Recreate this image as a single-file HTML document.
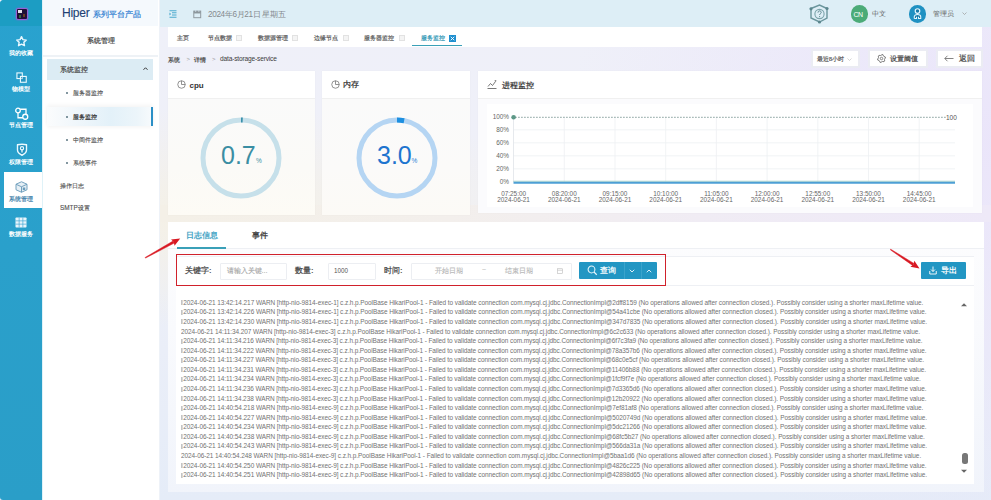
<!DOCTYPE html>
<html><head><meta charset="utf-8">
<style>
*{margin:0;padding:0;box-sizing:border-box}
html,body{width:991px;height:500px;overflow:hidden;font-family:"Liberation Sans",sans-serif;color:#333}
body{background:radial-gradient(ellipse 420px 110px at 200px 218px,rgba(245,241,230,1),rgba(245,241,230,0)),radial-gradient(ellipse 420px 420px at 991px 140px,rgba(234,228,250,.9),rgba(234,228,250,.5) 50%,rgba(234,228,250,0) 100%),linear-gradient(180deg,#eff0f9 0%,#eff0f8 40%,#e5ecf8 100%);position:relative}
.a{position:absolute;white-space:nowrap}
.t{position:absolute;white-space:nowrap;line-height:1}
/* icon bar */
#ib{left:0;top:0;width:42px;height:500px;background:linear-gradient(180deg,#29a2cf 0%,#2aa0cb 50%,#2a9ec8 100%);border-top-left-radius:4px;border-bottom-left-radius:3px;overflow:hidden}
#ib .top{left:0;top:0;width:42px;height:26px;background:#1c9dc3}
.nl{left:0;width:42px;text-align:center;color:#fff;font-size:6.3px;line-height:8px;font-weight:600}
/* sidebar */
#sb{left:42px;top:0;width:118px;height:500px;background:#fff;border-right:1px solid #eef2f8;border-left:1px solid #dff2f8}
.sl{font-size:6.4px;color:#505050;line-height:8px;-webkit-text-stroke:0.12px #505050}
.dot{position:absolute;width:2px;height:2px;border-radius:1px;background:#5a7480}
/* header */
#hd{left:160px;top:0;width:831px;height:27px;background:#ddeef6}
#tabs{left:168px;top:27px;width:814px;height:20px;background:#fff}
.tb{font-size:6.3px;color:#666;line-height:8px;font-weight:600}
.cx{position:absolute;width:6px;height:6px;border:1px solid #e2e2e2;background:#f4f4f4}
.card{position:absolute;background:#fff;box-shadow:0 0 1px rgba(0,0,0,.06)}
.card .bd{position:absolute;left:0;top:27px;right:0;bottom:0;background:#fbfbfb;border-top:1px solid #f0f0f0}
.ll{height:9.58px;line-height:9.58px;font-size:6.45px;color:#727272;letter-spacing:-0.063px;white-space:nowrap}
.pm{display:inline-block;width:2px;height:5px;border-left:0.8px solid #c4c4c4;border-right:0.8px solid #d8d8d8;vertical-align:-0.5px;margin-right:0.3px}
.btn{position:absolute;background:#fff;border:2px solid #ebecf3;border-radius:1px}
.lbl{font-size:7.6px;color:#555;line-height:10px;font-weight:600}
.inp{position:absolute;background:#fff;border:1px solid #eceef2;border-radius:1px}
.ph{font-size:7.3px;color:#a4a4a4;line-height:8px;-webkit-text-stroke:0.1px #a4a4a4}
.ax{font-size:6.4px;color:#666;line-height:7px;text-align:center}
</style></head><body>

<!-- ICON BAR -->
<div id="ib" class="a">
  <div class="a top"></div>
  <div class="a" style="left:16.5px;top:8.5px;width:10px;height:10px;background:#1f1036;box-shadow:0 0 1.5px 0.8px #b452d8;border-radius:1px"></div>
  <div class="a" style="left:18px;top:10px;width:3.5px;height:3px;background:#e4e0ea"></div>
  <div class="a" style="left:18.5px;top:14.5px;width:2px;height:3px;background:#2e6a3a"></div>
  <div class="a" style="left:22.5px;top:14px;width:2.5px;height:3px;background:#6a3a22"></div>
  <!-- star -->
  <svg class="a" style="left:15px;top:34.5px" width="13" height="13" viewBox="0 0 24 24"><path d="M12 3l2.7 5.6 6.1.8-4.5 4.2 1.2 6.1L12 16.8l-5.5 2.9 1.2-6.1-4.5-4.2 6.1-.8z" fill="rgba(20,120,170,.25)" stroke="#e8f8ff" stroke-width="2.6" stroke-linejoin="round"/></svg>
  <div class="a nl" style="top:48.5px">我的收藏</div>
  <!-- model -->
  <svg class="a" style="left:15.8px;top:71.6px" width="11.2" height="11.2" viewBox="0 0 24 24"><rect x="2" y="2" width="11.5" height="12" fill="rgba(20,110,160,.25)" stroke="#eafaff" stroke-width="2.4"/><rect x="9.5" y="9.5" width="12.5" height="12.5" fill="rgba(20,110,160,.25)" stroke="#eafaff" stroke-width="2.4"/></svg>
  <div class="a nl" style="top:85px">物模型</div>
  <!-- node -->
  <svg class="a" style="left:12px;top:105px" width="20" height="17" viewBox="0 0 40 34"><circle cx="12" cy="11" r="4.6" fill="none" stroke="#fff" stroke-width="2.6"/><circle cx="26.5" cy="23.5" r="5" fill="none" stroke="#fff" stroke-width="2.6"/><path d="M16.5 8.5H28V18M12 15.6V25.5H21.5" fill="none" stroke="#fff" stroke-width="2.6"/></svg>
  <div class="a nl" style="top:120.7px">节点管理</div>
  <!-- shield -->
  <svg class="a" style="left:15.5px;top:143px" width="12" height="13" viewBox="0 0 24 26"><path d="M3 3.5Q12 1.5 21 3.5V14c0 4.5-4 8-9 10.5C7 22 3 18.5 3 14z" fill="rgba(20,110,160,.3)" stroke="#eafaff" stroke-width="2.8" stroke-linejoin="round"/><circle cx="12" cy="10.5" r="3.2" fill="none" stroke="#eafaff" stroke-width="2.4"/><path d="M12 13.5v5.5" stroke="#eafaff" stroke-width="2.6"/></svg>
  <div class="a nl" style="top:158px">权限管理</div>
  <!-- active -->
  <div class="a" style="left:4px;top:171.5px;width:38px;height:36.5px;background:#fff"></div>
  <svg class="a" style="left:15px;top:180.5px" width="13" height="12" viewBox="0 0 26 24"><path d="M13 1.5L24 6.5v11L13 22.5 2 17.5v-11z" fill="#e6eff5" stroke="#6b9cbb" stroke-width="1.9"/><path d="M2 6.5l11 5 11-5M13 11.5v11" fill="none" stroke="#6b9cbb" stroke-width="1.9"/><rect x="15.5" y="13" width="5" height="5" fill="#6b9cbb"/></svg>
  <div class="a nl" style="top:194.5px;color:#4a86ad">系统管理</div>
  <!-- grid -->
  <svg class="a" style="left:15px;top:217px" width="12" height="11" viewBox="0 0 24 22"><rect x="1" y="1" width="22" height="20" rx="1.5" fill="#eaf5fb"/><path d="M1 7.7h22M1 14.3h22M8.3 1v20M15.7 1v20" stroke="#3aa6d4" stroke-width="1.3"/></svg>
  <div class="a nl" style="top:230px">数据服务</div>
</div>

<!-- SIDEBAR -->
<div id="sb" class="a">
  <div class="a" style="left:0;top:0;width:115px;height:26px;background:#f5f9fd"></div>
  <div class="t" style="left:18.5px;top:6px;font-size:13px;color:#203f73;letter-spacing:-0.3px;-webkit-text-stroke:0.1px #203f73;transform:scaleX(0.93);transform-origin:0 0">Hiper</div>
  <div class="t" style="left:49.5px;top:10.5px;font-size:8px;color:#4a8ed6;font-weight:600">系列平台产品</div>
  <div class="t" style="left:44px;top:36.5px;font-size:7.3px;color:#555;font-weight:600">系统管理</div>
  <div class="a" style="left:0;top:55px;width:115px;height:1.5px;background:#eef2f6"></div>
  <div class="a" style="left:4px;top:59px;width:106px;height:21px;background:#dcecf4"></div>
  <div class="t sl" style="left:17px;top:65.5px;color:#444;font-size:6.8px;-webkit-text-stroke:0.2px #444">系统监控</div>
  <svg class="a" style="left:100px;top:67px" width="5" height="3" viewBox="0 0 10 6"><path d="M1 5.5L5 1.5l4 4" fill="none" stroke="#333" stroke-width="2"/></svg>
  <div class="dot" style="left:23px;top:92px"></div>
  <div class="t sl" style="left:29.5px;top:89px">服务器监控</div>
  <div class="a" style="left:4px;top:106.5px;width:106px;height:19.5px;background:linear-gradient(90deg,#fbfcfd 0%,#f1f7fb 25%,#e3f1f9 60%,#ecf5fa 85%,#f8fbfd 100%);box-shadow:0 -2px 4px rgba(0,0,0,.045),0 2px 3px rgba(0,0,0,.03)"></div>
  <div class="a" style="left:107.5px;top:106.5px;width:2px;height:19px;background:#2b8fc6"></div>
  <div class="dot" style="left:23px;top:115.5px"></div>
  <div class="t sl" style="left:29.5px;top:112.5px;color:#333;-webkit-text-stroke:0.2px #333">服务监控</div>
  <div class="dot" style="left:23px;top:139px"></div>
  <div class="t sl" style="left:30px;top:136px">中间件监控</div>
  <div class="dot" style="left:23px;top:161.5px"></div>
  <div class="t sl" style="left:30px;top:158.5px">系统事件</div>
  <div class="t sl" style="left:17px;top:181.5px">操作日志</div>
  <div class="t sl" style="left:17px;top:204px">SMTP设置</div>
</div>

<!-- HEADER -->
<div id="hd" class="a">
  <svg class="a" style="left:9px;top:10px" width="8" height="8" viewBox="0 0 16 16"><path d="M1 1.5h14M6 5.5h9M6 10h9M1 14.5h14" stroke="#3aa0c8" stroke-width="1.8"/><path d="M1 5l3 3-3 3z" fill="#3aa0c8"/></svg>
  <svg class="a" style="left:33px;top:10px" width="8.5" height="8.5" viewBox="0 0 16 16"><rect x="1.5" y="2" width="13" height="12.5" fill="none" stroke="#8d979d" stroke-width="1.8"/><rect x="1.5" y="2" width="13" height="4.5" fill="#8d979d"/><path d="M5 0.5v3M11 0.5v3" stroke="#ddeef6" stroke-width="1.4"/></svg>
  <div class="t" style="left:48px;top:10.5px;font-size:8.2px;color:#858a8e;letter-spacing:-0.35px">2024年6月21日 星期五</div>
  <!-- help hex -->
  <svg class="a" style="left:645px;top:2px" width="30" height="25" viewBox="0 0 30 25"><path d="M6 6.5L14.5 3 22 6.5V16L14.5 20 6 16Z" fill="none" stroke="#6a959c" stroke-width="1.4"/><circle cx="6" cy="6.8" r="1.6" fill="#5b868e"/><circle cx="22" cy="6.5" r="1.6" fill="#5b868e"/><circle cx="14.5" cy="20" r="1.6" fill="#5b868e"/><circle cx="14.5" cy="12" r="4.6" fill="none" stroke="#7aa3aa" stroke-width="1.1"/><path d="M13 10.6c0-1 .7-1.7 1.6-1.7s1.6.7 1.6 1.6c0 1.2-1.6 1.2-1.6 2.5" fill="none" stroke="#5b868e" stroke-width="1"/><circle cx="14.6" cy="14.6" r=".6" fill="#5b868e"/></svg>
  <div class="a" style="left:690.5px;top:5px;width:17.5px;height:17.5px;border-radius:50%;background:#4bab78"></div>
  <div class="t" style="left:693.5px;top:10.5px;font-size:7px;color:#fff;letter-spacing:-0.6px">CN</div>
  <div class="t" style="left:712px;top:10px;font-size:7.2px;color:#666">中文</div>
  <div class="a" style="left:748.5px;top:5px;width:17.5px;height:17.5px;border-radius:50%;background:#1f91c2"></div>
  <svg class="a" style="left:752px;top:6.5px" width="11" height="13" viewBox="0 0 22 26"><circle cx="11" cy="8" r="4.6" fill="rgba(10,80,120,.35)" stroke="#e6f7fd" stroke-width="2.3"/><path d="M4.5 23V19.5Q4.5 15 11 15Q17.5 15 17.5 19.5V23H13V19.5M9 19.5V23H4.5" fill="rgba(10,80,120,.35)" stroke="#e6f7fd" stroke-width="2.1" stroke-linejoin="round"/></svg>
  <div class="t" style="left:773px;top:10px;font-size:7.2px;color:#666">管理员</div>
  <svg class="a" style="left:802px;top:12px" width="5" height="3" viewBox="0 0 10 6"><path d="M1 1l4 4 4-4" fill="none" stroke="#999" stroke-width="1.4"/></svg>
</div>

<!-- TABS -->
<div class="a" style="left:160px;top:205px;width:831px;height:17px;background:linear-gradient(90deg,rgba(244,240,231,1) 0%,rgba(243,239,236,1) 35%,rgba(240,236,244,1) 65%,rgba(238,233,248,1) 100%)"></div>
<div id="tabs" class="a">
  <div class="t tb" style="left:9px;top:6.5px">主页</div>
  <div class="t tb" style="left:40px;top:6.5px">节点数据</div><div class="cx" style="left:68px;top:8px"></div>
  <div class="t tb" style="left:89.5px;top:6.5px">数据源管理</div><div class="cx" style="left:124px;top:8px"></div>
  <div class="t tb" style="left:145.5px;top:6.5px">边缘节点</div><div class="cx" style="left:174.5px;top:8px"></div>
  <div class="t tb" style="left:196px;top:6.5px">服务器监控</div><div class="cx" style="left:231px;top:8px"></div>
  <div class="t tb" style="left:252.5px;top:6.5px;color:#3a9bb8">服务监控</div>
  <svg class="a" style="left:281px;top:7.5px" width="7" height="7" viewBox="0 0 14 14"><rect x="0" y="0" width="14" height="14" fill="#1f8fd0"/><path d="M3.5 3.5l7 7M10.5 3.5l-7 7" stroke="#fff" stroke-width="1.8"/></svg>
  <div class="a" style="left:244px;top:17.5px;width:50px;height:1.6px;background:#3aa0b8"></div>
</div>

<!-- BREADCRUMB -->
<div class="t" style="left:168px;top:55.5px;font-size:6.4px;color:#555;line-height:8px;font-weight:600">系统</div>
<div class="t" style="left:186.5px;top:55px;font-size:6px;color:#999;line-height:8px">&gt;</div>
<div class="t" style="left:194px;top:55.5px;font-size:6.4px;color:#555;line-height:8px;font-weight:600">详情</div>
<div class="t" style="left:212px;top:55px;font-size:6px;color:#999;line-height:8px">&gt;</div>
<div class="t" style="left:220px;top:55px;font-size:6.6px;color:#3c3c3c;line-height:8px;letter-spacing:-0.17px">data-storage-service</div>

<div class="btn" style="left:811px;top:48.5px;width:49px;height:19px"></div>
<div class="t" style="left:817px;top:54.5px;font-size:6.2px;color:#666;line-height:8px;letter-spacing:-0.1px;font-weight:600">最近8小时</div>
<svg class="a" style="left:847px;top:57.5px" width="5" height="3" viewBox="0 0 10 6"><path d="M1 1l4 4 4-4" fill="none" stroke="#bbb" stroke-width="1.2"/></svg>
<div class="btn" style="left:868px;top:48.5px;width:60px;height:19px"></div>
<svg class="a" style="left:876.5px;top:54px" width="9" height="9" viewBox="0 0 16 16"><path d="M8.94 0.86 L10.76 1.35 L11.41 3.56 L12.44 4.59 L14.65 5.24 L15.14 7.06 L13.55 8.73 L13.17 10.14 L13.71 12.38 L12.38 13.71 L10.14 13.17 L8.73 13.55 L7.06 15.14 L5.24 14.65 L4.59 12.44 L3.56 11.41 L1.35 10.76 L0.86 8.94 L2.45 7.27 L2.83 5.86 L2.29 3.62 L3.62 2.29 L5.86 2.83 L7.27 2.45Z" fill="none" stroke="#666" stroke-width="1.5" stroke-linejoin="round"/><circle cx="8" cy="8" r="2.2" fill="none" stroke="#666" stroke-width="1.4"/></svg>
<div class="t" style="left:889.5px;top:54.5px;font-size:7.4px;color:#5a5a5a;line-height:8px;font-weight:600">设置阈值</div>
<div class="btn" style="left:936px;top:48.5px;width:47px;height:19px"></div>
<svg class="a" style="left:944px;top:55px" width="10" height="7" viewBox="0 0 20 14"><path d="M19 7H2M7 1.5L1.5 7 7 12.5" fill="none" stroke="#666" stroke-width="1.6"/></svg>
<div class="t" style="left:959px;top:54.5px;font-size:7.6px;color:#5a5a5a;line-height:8px;font-weight:600">返回</div>

<!-- CPU CARD -->
<div class="card" style="left:168px;top:71px;width:147px;height:143.5px">
  <div class="bd" style="background:linear-gradient(180deg,#fafafa 0%,#fbfaf7 60%,#fdfbf5 100%)"></div>
</div>
<svg class="a" style="left:176.5px;top:80px" width="9" height="9" viewBox="0 0 18 18"><circle cx="9" cy="9" r="7.5" fill="none" stroke="#777" stroke-width="1.6"/><path d="M9 1.5V9h7.5" fill="none" stroke="#777" stroke-width="1.6"/></svg>
<div class="t" style="left:189.5px;top:80.5px;font-size:8px;font-weight:bold;color:#333;line-height:9px">cpu</div>
<svg class="a" style="left:200px;top:116.5px" width="82" height="82" viewBox="0 0 82 82"><circle cx="41" cy="41" r="38" fill="none" stroke="#c6e0ea" stroke-width="5"/><path d="M41 3 A38 38 0 0 1 42.7 3.04" fill="none" stroke="#3a8fab" stroke-width="5"/></svg>
<div class="t" style="left:221px;top:143px;font-size:25px;color:#3a8ea3;line-height:25px">0.7</div>
<div class="t" style="left:256px;top:157px;font-size:6.5px;color:#3a8ea3;line-height:7px">%</div>

<!-- MEM CARD -->
<div class="card" style="left:322px;top:71px;width:148px;height:143.5px">
  <div class="bd" style="background:linear-gradient(180deg,#fafafa 0%,#fbfaf9 60%,#fcfaf6 100%)"></div>
</div>
<svg class="a" style="left:331px;top:80px" width="9" height="9" viewBox="0 0 18 18"><circle cx="9" cy="9" r="7.5" fill="none" stroke="#777" stroke-width="1.6"/><path d="M9 1.5V9h7.5" fill="none" stroke="#777" stroke-width="1.6"/></svg>
<div class="t" style="left:343px;top:80px;font-size:7.6px;color:#444;line-height:9px;font-weight:600">内存</div>
<svg class="a" style="left:355.5px;top:116.5px" width="82" height="82" viewBox="0 0 82 82"><circle cx="41" cy="41" r="38" fill="none" stroke="#b5d5f3" stroke-width="5"/><path d="M41 3 A38 38 0 0 1 48.1 3.67" fill="none" stroke="#1d8fe0" stroke-width="5"/></svg>
<div class="t" style="left:377px;top:143px;font-size:25px;color:#1d74cf;line-height:25px">3.0</div>
<div class="t" style="left:411.5px;top:157px;font-size:6.5px;color:#2a7fd6;line-height:7px">%</div>

<!-- PROCESS CARD -->
<div class="card" style="left:478px;top:71px;width:504px;height:141.5px">
  <div class="bd" style="background:#fbfbfd"></div>
  <div class="a" style="left:9px;top:33px;width:486px;height:103px;background:#fff"></div>
</div>
<svg class="a" style="left:487px;top:80px" width="10" height="9" viewBox="0 0 20 18"><path d="M1 17h18" stroke="#555" stroke-width="1.6"/><path d="M2 13l5-6 4 4 6-8" fill="none" stroke="#555" stroke-width="1.6"/><path d="M15 1.5l3-1-.8 3" fill="none" stroke="#555" stroke-width="1.2"/></svg>
<div class="t" style="left:501.5px;top:80.5px;font-size:7.6px;color:#444;line-height:9px;font-weight:600">进程监控</div>
<svg class="a" style="left:478px;top:100px" width="504" height="113" viewBox="0 0 504 113">
  <g stroke="#eef0f3" stroke-width="0.8">
    <path d="M35.5 29.8H477M35.5 42.8H477M35.5 55.8H477M35.5 68.8H477"/>
    <path d="M86.3 16.8V81.8M137.0 16.8V81.8M187.7 16.8V81.8M238.4 16.8V81.8M289.1 16.8V81.8M339.8 16.8V81.8M390.5 16.8V81.8M441.2 16.8V81.8"/>
  </g>
  <path d="M35.5 16.8V82" stroke="#e0e3e8" stroke-width="0.8"/>
  <path d="M37 17.3H468" stroke="#8aa39f" stroke-width="0.9" stroke-dasharray="1.8 1.2"/>
  <circle cx="35.6" cy="17.2" r="2.3" fill="#5d9887"/>
  <path d="M35.5 82.6H477" stroke="#4d9fd5" stroke-width="2.2"/>
  <path d="M35.5 81.2H477" stroke="#a8d2c8" stroke-width="0.8"/>
</svg>
<div class="t" style="left:946px;top:113.5px;font-size:6.5px;color:#555;line-height:7px">100</div>
<div class="t ax" style="left:486px;top:113.3px;width:23px;text-align:right">100%</div>
<div class="t ax" style="left:486px;top:126.3px;width:23px;text-align:right">80%</div>
<div class="t ax" style="left:486px;top:139.3px;width:23px;text-align:right">60%</div>
<div class="t ax" style="left:486px;top:152.3px;width:23px;text-align:right">40%</div>
<div class="t ax" style="left:486px;top:165.3px;width:23px;text-align:right">20%</div>
<div class="t ax" style="left:486px;top:178.3px;width:23px;text-align:right">0%</div>
<div class="t ax" style="left:493.6px;top:191.1px;width:40px;line-height:5.8px">07:25:00<br>2024-06-21</div>
<div class="t ax" style="left:544.3000000000001px;top:191.1px;width:40px;line-height:5.8px">08:20:00<br>2024-06-21</div>
<div class="t ax" style="left:595.0px;top:191.1px;width:40px;line-height:5.8px">09:15:00<br>2024-06-21</div>
<div class="t ax" style="left:645.7px;top:191.1px;width:40px;line-height:5.8px">10:10:00<br>2024-06-21</div>
<div class="t ax" style="left:696.4000000000001px;top:191.1px;width:40px;line-height:5.8px">11:05:00<br>2024-06-21</div>
<div class="t ax" style="left:747.1px;top:191.1px;width:40px;line-height:5.8px">12:00:00<br>2024-06-21</div>
<div class="t ax" style="left:797.8000000000001px;top:191.1px;width:40px;line-height:5.8px">12:55:00<br>2024-06-21</div>
<div class="t ax" style="left:848.5px;top:191.1px;width:40px;line-height:5.8px">13:50:00<br>2024-06-21</div>
<div class="t ax" style="left:899.2px;top:191.1px;width:40px;line-height:5.8px">14:45:00<br>2024-06-21</div>

<!-- LOG PANEL -->
<div class="a" style="left:168px;top:222px;width:816px;height:269.5px;background:linear-gradient(180deg,#fdfdfe 0%,#f9fafd 40%,#f1f4fb 100%)"></div>
<div class="a" style="left:168px;top:222px;width:816px;height:27px;background:#fff;border-bottom:1px solid #eef0f4"></div>
<div class="t" style="left:186px;top:231px;font-size:7.8px;color:#3fa3c4;line-height:9px;font-weight:600">日志信息</div>
<div class="t" style="left:251.5px;top:231px;font-size:8px;color:#3a3a3a;line-height:9px;-webkit-text-stroke:0.3px #3a3a3a">事件</div>
<div class="a" style="left:177px;top:247.2px;width:49px;height:1.6px;background:#3aa0b8"></div>
<div class="a" style="left:176px;top:256px;width:798px;height:28.5px;background:#fff;border-top:1px solid #eef0f4"></div>
<div class="t lbl" style="left:185px;top:265.5px">关键字:</div>
<div class="inp" style="left:220px;top:262.5px;width:67px;height:17px"></div>
<div class="t ph" style="left:226.5px;top:266.5px">请输入关键...</div>
<div class="t lbl" style="left:295px;top:265.5px">数量:</div>
<div class="inp" style="left:327.5px;top:262.5px;width:48px;height:17.5px"></div>
<div class="t" style="left:334px;top:267px;font-size:6.3px;color:#555;line-height:8px">1000</div>
<div class="t lbl" style="left:384px;top:265.5px">时间:</div>
<div class="inp" style="left:410.5px;top:262.5px;width:161px;height:17.5px"></div>
<div class="t ph" style="left:434.5px;top:266.5px;color:#bdbdbd">开始日期</div>
<div class="t ph" style="left:482px;top:266px;color:#bbb;font-weight:normal;font-size:7px">~</div>
<div class="t ph" style="left:504.5px;top:266.5px;color:#bdbdbd">结束日期</div>
<svg class="a" style="left:557px;top:267.5px" width="6" height="6" viewBox="0 0 12 12"><rect x="1" y="1.5" width="10" height="9.5" fill="none" stroke="#bbb" stroke-width="1.2"/><path d="M1 4.5h10" stroke="#bbb" stroke-width="1.2"/></svg>
<div class="a" style="left:579px;top:262.2px;width:78px;height:16.8px;background:#2296c3;border-radius:1px"></div>
<div class="a" style="left:623.5px;top:262.2px;width:0.6px;height:16.8px;background:#3aa3cc"></div>
<div class="a" style="left:640.5px;top:262.2px;width:0.6px;height:16.8px;background:#3aa3cc"></div>
<svg class="a" style="left:587px;top:265.3px" width="10.5" height="10.5" viewBox="0 0 21 21"><circle cx="9" cy="9" r="6.8" fill="none" stroke="#e8f6fc" stroke-width="2.1"/><path d="M14 14l5.5 5.5" stroke="#e8f6fc" stroke-width="2.3"/></svg>
<div class="t" style="left:600px;top:266.5px;font-size:8px;color:#f2fafd;line-height:8px;font-weight:600">查询</div>
<svg class="a" style="left:629px;top:268.5px" width="6" height="4" viewBox="0 0 12 8"><path d="M1.5 1.5l4.5 4.5 4.5-4.5" fill="none" stroke="#d8eef8" stroke-width="2"/></svg>
<svg class="a" style="left:646px;top:268.5px" width="6" height="4" viewBox="0 0 12 8"><path d="M1.5 6.5l4.5-4.5 4.5 4.5" fill="none" stroke="#d8eef8" stroke-width="2"/></svg>
<div class="a" style="left:921px;top:262px;width:45px;height:17px;background:#2296c3;border-radius:1px"></div>
<svg class="a" style="left:928.5px;top:265.5px" width="8" height="9" viewBox="0 0 16 18"><path d="M8 1v10M4 7l4 4 4-4" fill="none" stroke="#fff" stroke-width="1.8"/><path d="M1.5 10v6h13v-6" fill="none" stroke="#fff" stroke-width="1.8"/></svg>
<div class="t" style="left:940.5px;top:266.5px;font-size:8px;color:#fff;line-height:8px;font-weight:600">导出</div>

<!-- red arrows -->
<svg class="a" style="left:0;top:0" width="991" height="500" viewBox="0 0 991 500"><path d="M145.47 258.11 L174.23 243.09 L173.06 241.00 L145.13 257.49Z" fill="#d81822" stroke="#d81822" stroke-width="0.5" stroke-linejoin="round"/><path d="M174.52 245.68 L180.20 238.40 L171.02 239.38 L173.82 241.95Z" fill="#d81822"/></svg>
<svg class="a" style="left:0;top:0" width="991" height="500" viewBox="0 0 991 500"><path d="M890.31 249.79 L912.57 265.39 L913.88 263.39 L890.69 249.21Z" fill="#d81822" stroke="#d81822" stroke-width="0.5" stroke-linejoin="round"/><path d="M910.42 266.85 L919.50 268.50 L914.36 260.83 L913.39 264.50Z" fill="#d81822"/></svg>

<!-- log area -->
<!--LOGAREA-->
<div class="a" style="left:176px;top:285px;width:798px;height:198.5px;background:#fff;border-top:1px solid #eef0f4"></div>
<div class="a" style="left:181px;top:297.8px;width:760px;overflow:hidden">
<div class="ll"><i class="pm"></i>2024-06-21 13:42:14.217 WARN [http-nio-9814-exec-1] c.z.h.p.PoolBase HikariPool-1 - Failed to validate connection com.mysql.cj.jdbc.ConnectionImpl@2dff8159 (No operations allowed after connection closed.). Possibly consider using a shorter maxLifetime value.</div>
<div class="ll"><i class="pm"></i>2024-06-21 13:42:14.226 WARN [http-nio-9814-exec-1] c.z.h.p.PoolBase HikariPool-1 - Failed to validate connection com.mysql.cj.jdbc.ConnectionImpl@54a41cbe (No operations allowed after connection closed.). Possibly consider using a shorter maxLifetime value.</div>
<div class="ll"><i class="pm"></i>2024-06-21 13:42:14.230 WARN [http-nio-9814-exec-1] c.z.h.p.PoolBase HikariPool-1 - Failed to validate connection com.mysql.cj.jdbc.ConnectionImpl@347d7835 (No operations allowed after connection closed.). Possibly consider using a shorter maxLifetime value.</div>
<div class="ll">2024-06-21 14:11:34.207 WARN [http-nio-9814-exec-3] c.z.h.p.PoolBase HikariPool-1 - Failed to validate connection com.mysql.cj.jdbc.ConnectionImpl@6c2c633 (No operations allowed after connection closed.). Possibly consider using a shorter maxLifetime value.</div>
<div class="ll"><i class="pm"></i>2024-06-21 14:11:34.216 WARN [http-nio-9814-exec-3] c.z.h.p.PoolBase HikariPool-1 - Failed to validate connection com.mysql.cj.jdbc.ConnectionImpl@6f7c3fa9 (No operations allowed after connection closed.). Possibly consider using a shorter maxLifetime value.</div>
<div class="ll"><i class="pm"></i>2024-06-21 14:11:34.222 WARN [http-nio-9814-exec-3] c.z.h.p.PoolBase HikariPool-1 - Failed to validate connection com.mysql.cj.jdbc.ConnectionImpl@78a357b6 (No operations allowed after connection closed.). Possibly consider using a shorter maxLifetime value.</div>
<div class="ll"><i class="pm"></i>2024-06-21 14:11:34.227 WARN [http-nio-9814-exec-3] c.z.h.p.PoolBase HikariPool-1 - Failed to validate connection com.mysql.cj.jdbc.ConnectionImpl@68c0e5cf (No operations allowed after connection closed.). Possibly consider using a shorter maxLifetime value.</div>
<div class="ll"><i class="pm"></i>2024-06-21 14:11:34.231 WARN [http-nio-9814-exec-3] c.z.h.p.PoolBase HikariPool-1 - Failed to validate connection com.mysql.cj.jdbc.ConnectionImpl@11406b88 (No operations allowed after connection closed.). Possibly consider using a shorter maxLifetime value.</div>
<div class="ll"><i class="pm"></i>2024-06-21 14:11:34.234 WARN [http-nio-9814-exec-3] c.z.h.p.PoolBase HikariPool-1 - Failed to validate connection com.mysql.cj.jdbc.ConnectionImpl@1fcf9f7e (No operations allowed after connection closed.). Possibly consider using a shorter maxLifetime value.</div>
<div class="ll"><i class="pm"></i>2024-06-21 14:11:34.236 WARN [http-nio-9814-exec-3] c.z.h.p.PoolBase HikariPool-1 - Failed to validate connection com.mysql.cj.jdbc.ConnectionImpl@7d3365d6 (No operations allowed after connection closed.). Possibly consider using a shorter maxLifetime value.</div>
<div class="ll"><i class="pm"></i>2024-06-21 14:11:34.238 WARN [http-nio-9814-exec-3] c.z.h.p.PoolBase HikariPool-1 - Failed to validate connection com.mysql.cj.jdbc.ConnectionImpl@12b20922 (No operations allowed after connection closed.). Possibly consider using a shorter maxLifetime value.</div>
<div class="ll"><i class="pm"></i>2024-06-21 14:40:54.218 WARN [http-nio-9814-exec-9] c.z.h.p.PoolBase HikariPool-1 - Failed to validate connection com.mysql.cj.jdbc.ConnectionImpl@7ef81af8 (No operations allowed after connection closed.). Possibly consider using a shorter maxLifetime value.</div>
<div class="ll"><i class="pm"></i>2024-06-21 14:40:54.227 WARN [http-nio-9814-exec-9] c.z.h.p.PoolBase HikariPool-1 - Failed to validate connection com.mysql.cj.jdbc.ConnectionImpl@5020749d (No operations allowed after connection closed.). Possibly consider using a shorter maxLifetime value.</div>
<div class="ll"><i class="pm"></i>2024-06-21 14:40:54.234 WARN [http-nio-9814-exec-9] c.z.h.p.PoolBase HikariPool-1 - Failed to validate connection com.mysql.cj.jdbc.ConnectionImpl@5dc21266 (No operations allowed after connection closed.). Possibly consider using a shorter maxLifetime value.</div>
<div class="ll"><i class="pm"></i>2024-06-21 14:40:54.238 WARN [http-nio-9814-exec-9] c.z.h.p.PoolBase HikariPool-1 - Failed to validate connection com.mysql.cj.jdbc.ConnectionImpl@68fc5b27 (No operations allowed after connection closed.). Possibly consider using a shorter maxLifetime value.</div>
<div class="ll"><i class="pm"></i>2024-06-21 14:40:54.243 WARN [http-nio-9814-exec-9] c.z.h.p.PoolBase HikariPool-1 - Failed to validate connection com.mysql.cj.jdbc.ConnectionImpl@566da31a (No operations allowed after connection closed.). Possibly consider using a shorter maxLifetime value.</div>
<div class="ll">2024-06-21 14:40:54.248 WARN [http-nio-9814-exec-9] c.z.h.p.PoolBase HikariPool-1 - Failed to validate connection com.mysql.cj.jdbc.ConnectionImpl@5baa1d6 (No operations allowed after connection closed.). Possibly consider using a shorter maxLifetime value.</div>
<div class="ll"><i class="pm"></i>2024-06-21 14:40:54.250 WARN [http-nio-9814-exec-9] c.z.h.p.PoolBase HikariPool-1 - Failed to validate connection com.mysql.cj.jdbc.ConnectionImpl@4826c225 (No operations allowed after connection closed.). Possibly consider using a shorter maxLifetime value.</div>
<div class="ll"><i class="pm"></i>2024-06-21 14:40:54.251 WARN [http-nio-9814-exec-9] c.z.h.p.PoolBase HikariPool-1 - Failed to validate connection com.mysql.cj.jdbc.ConnectionImpl@42898d65 (No operations allowed after connection closed.). Possibly consider using a shorter maxLifetime value.</div>
</div>
<div class="a" style="left:176px;top:254px;width:490px;height:32px;border:1.9px solid #d0212b"></div>
<svg class="a" style="left:960px;top:302px" width="8" height="5" viewBox="0 0 16 10"><path d="M2 8.5L8 2.5l6 6z" fill="#666"/></svg>
<div class="a" style="left:962px;top:452.5px;width:5.5px;height:11px;background:#777;border-radius:2.5px"></div>
<svg class="a" style="left:960px;top:469px" width="8" height="5" viewBox="0 0 16 10"><path d="M2 1.5L8 7.5l6-6z" fill="#666"/></svg>

</body></html>
